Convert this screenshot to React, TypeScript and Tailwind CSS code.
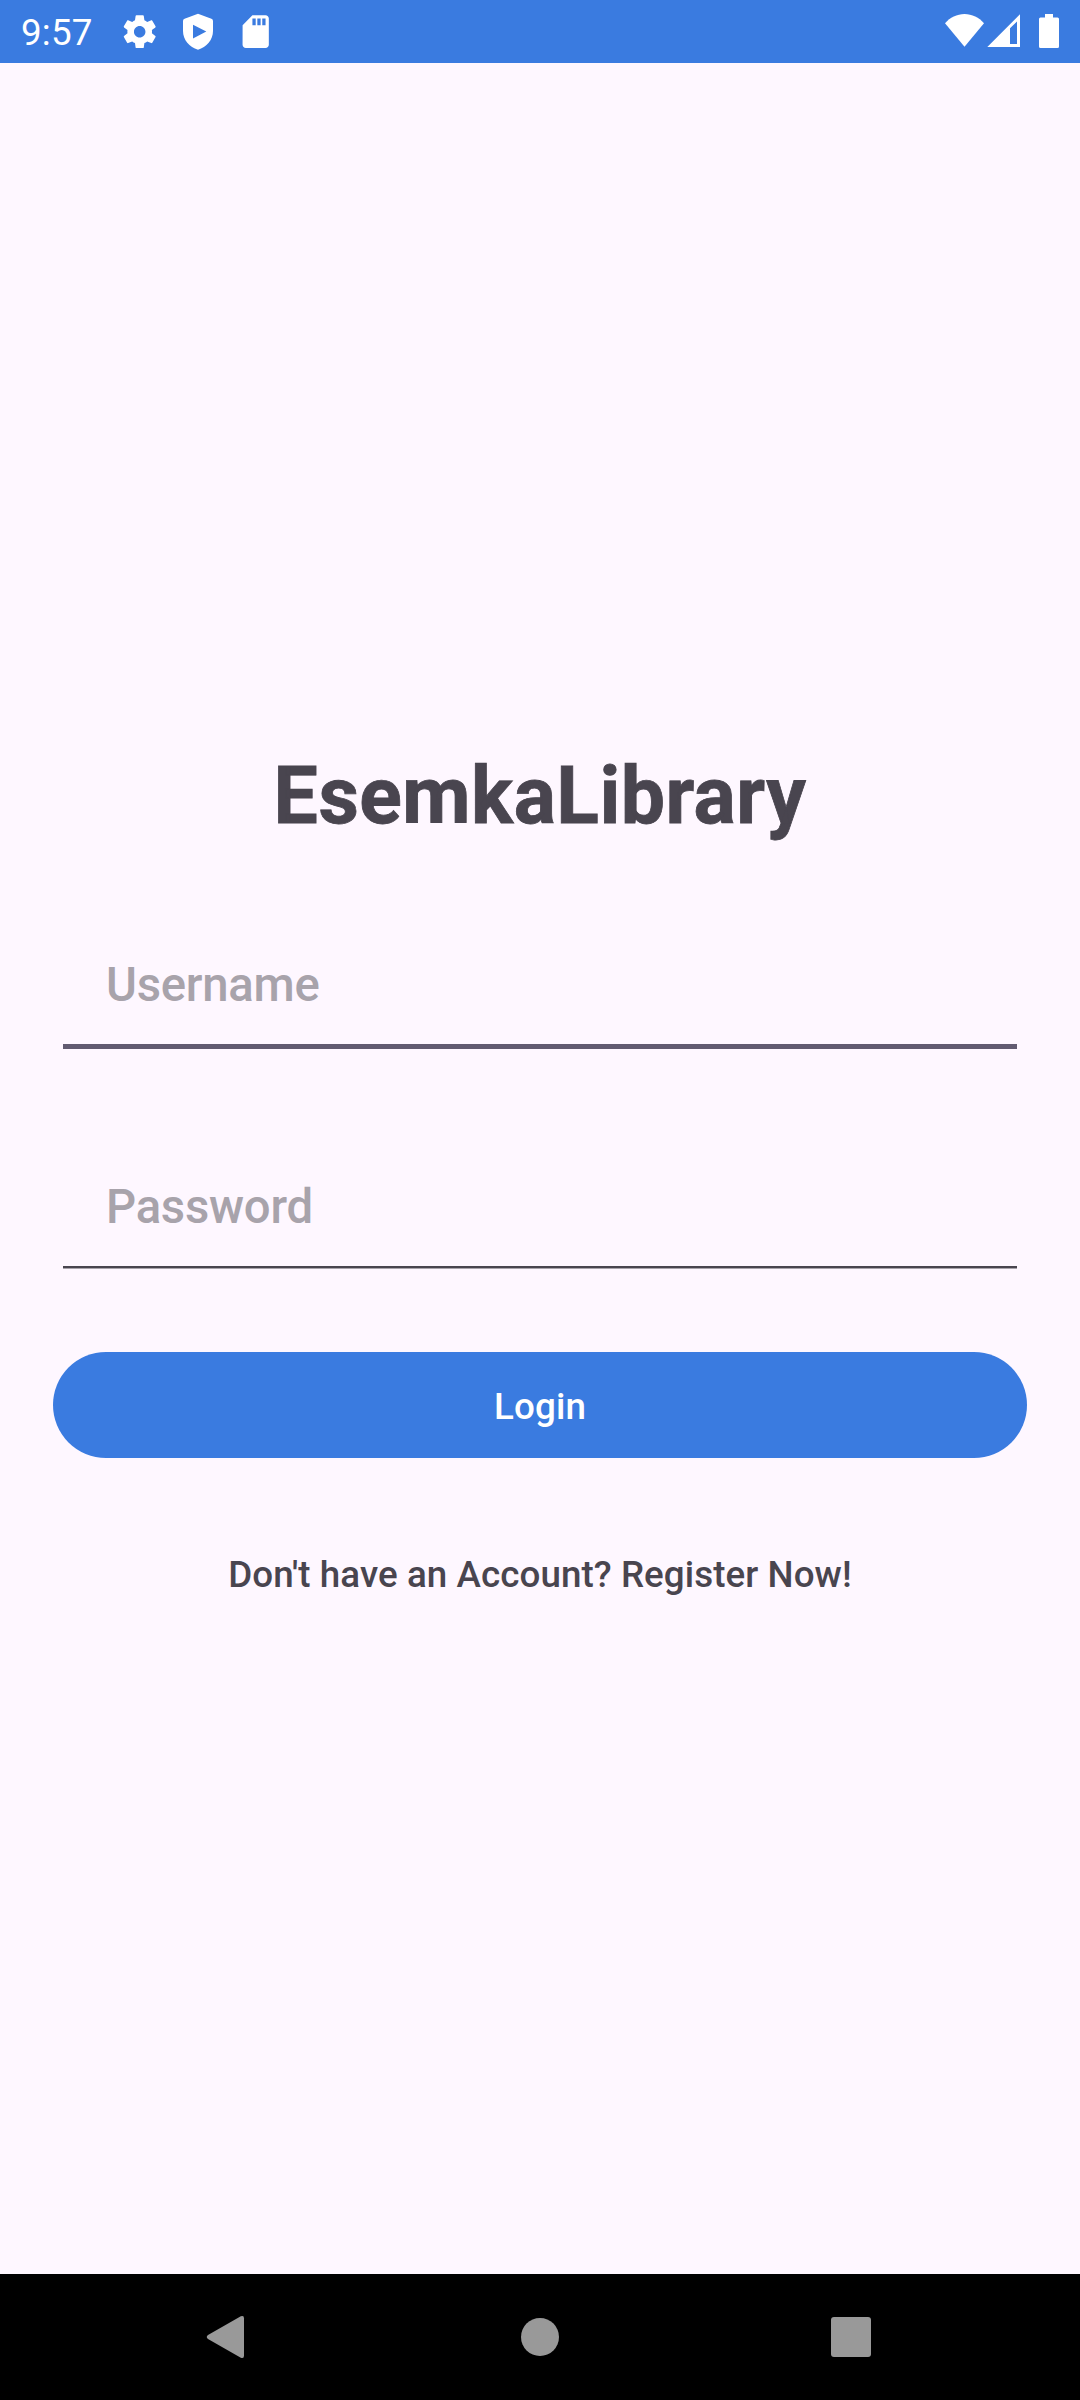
import React from "react";

function StatusBar() {
  return (
    <header className="flex h-[63px] items-start bg-[#3a7be0] text-white">
      <span className="ml-[21px] mt-[9px] w-[100px] text-[36.75px] leading-[48px] tracking-[0.2px]">9:57</span>
      <svg className="mt-[12px] -ml-[1px] h-[39.4px] w-[39.4px] shrink-0" viewBox="0 0 24 24" fill="currentColor">
        <path d="M19.43 12.98c.04-.32.07-.64.07-.98s-.03-.66-.07-.98l2.11-1.65c.19-.15.24-.42.12-.64l-2-3.46c-.12-.22-.39-.3-.61-.22l-2.49 1c-.52-.4-1.08-.73-1.69-.98l-.38-2.65C14.46 2.18 14.25 2 14 2h-4c-.25 0-.46.18-.49.42l-.38 2.65c-.61.25-1.17.59-1.69.98l-2.49-1c-.23-.09-.49 0-.61.22l-2 3.46c-.13.22-.07.49.12.64l2.11 1.65c-.04.32-.07.65-.07.98s.03.66.07.98l-2.11 1.65c-.19.15-.24.42-.12.64l2 3.46c.12.22.39.3.61.22l2.49-1c.52.4 1.08.73 1.69.98l.38 2.65c.03.24.24.42.49.42h4c.25 0 .46-.18.49-.42l.38-2.65c.61-.25 1.17-.59 1.69-.98l2.49 1c.23.09.49 0 .61-.22l2-3.46c.12-.22.07-.49-.12-.64l-2.11-1.65zM12 15.5c-1.93 0-3.5-1.57-3.5-3.5s1.57-3.5 3.5-3.5 3.5 1.57 3.5 3.5-1.57 3.5-3.5 3.5z" />
      </svg>
      <svg className="mt-[13px] ml-[22.6px] h-[38px] w-[32px] shrink-0" viewBox="182 13 32 38" fill="currentColor">
        <path fillRule="evenodd" d="M198 13.7 211.4 18.8Q213 19.4 213 21V31C213 40 206.5 47.2 198 49.7C189.5 47.2 183 40 183 31V21Q183 19.4 184.6 18.8ZM193 24.8V38.5L206.3 31.6Z" />
      </svg>
      <svg className="mt-[12px] ml-[22.4px] h-[39.4px] w-[39.4px] shrink-0" viewBox="0 0 24 24" fill="currentColor">
        <path d="M18 2h-8L4.02 8 4 20c0 1.1.9 2 2 2h12c1.1 0 2-.9 2-2V4c0-1.1-.9-2-2-2zm-6 6h-2V4h2v4zm3 0h-2V4h2v4zm3 0h-2V4h2v4z" />
      </svg>
      <svg className="ml-auto mr-[20px] mt-[12px] h-[38px] w-[116px] shrink-0" viewBox="944 12 116 38" fill="currentColor">
        <path d="M964.5 46.8 945 23.2C950 17.5 957 14 964.5 14S979 17.5 984 23.2Z" />
        <path fillRule="evenodd" d="M1020 14.3V47H987.3ZM1010 28.3V44H1017V21.5Z" />
        <path d="M1045 14H1053V17.5H1057.5Q1059 17.5 1059 19V46.5Q1059 48 1057.5 48H1040.5Q1039 48 1039 46.5V19Q1039 17.5 1040.5 17.5H1045Z" />
      </svg>
    </header>
  );
}

function NavigationBar() {
  return (
    <nav className="flex h-[126px] items-center justify-between bg-black pl-[206px] pr-[209px] text-[#999999]">
      <svg className="h-[44px] w-[39px]" viewBox="0 0 39 44" fill="currentColor">
        <path d="M34.8 1.3Q38 0 38 3.2V40.8Q38 44 34.8 42.7L2 24Q-.5 22 2 20Z" />
      </svg>
      <span className="ml-[4px] h-[38px] w-[38px] rounded-full bg-current" />
      <span className="h-[40px] w-[40px] rounded-[3px] bg-current" />
    </nav>
  );
}

export default function App() {
  return (
    <div className="flex h-[2400px] w-[1080px] flex-col overflow-hidden bg-[#fef7ff] font-['Roboto',sans-serif] text-[#49454f]">
      <StatusBar />
      <main className="flex flex-1 flex-col pt-[686px]">
        <h1 className="text-center text-[78.75px] leading-[94px] font-bold tracking-[0.5px] [-webkit-text-stroke:0.8px_#49454f]">
          EsemkaLibrary
        </h1>
        <input
          aria-label="Username"
          placeholder="Username"
          className="mx-[63px] mt-[84px] h-[122px] border-b-[5px] border-[#625b71] bg-transparent px-[43px] pb-[2px] text-[47.25px] font-medium tracking-[-0.25px] placeholder:text-[#a8a3ab]"
        />
        <input
          aria-label="Password"
          type="password"
          placeholder="Password"
          className="mx-[63px] mt-[100px] h-[119px] border-b-2 border-[#49454f] bg-transparent px-[43px] pb-[2px] text-[47.25px] font-medium tracking-[-0.25px] shadow-[0_1px_0_#a8a3ab] placeholder:text-[#a8a3ab]"
        />
        <button className="mx-[53px] mt-[84px] h-[106px] rounded-full bg-[#3a7be0] pt-[4px] text-[36.75px] font-medium tracking-[0.15px] text-white">
          Login
        </button>
        <p className="mt-[95px] text-center text-[36.75px] leading-[44px] font-medium tracking-[0.07px]">
          Don't have an Account? Register Now!
        </p>
      </main>
      <NavigationBar />
    </div>
  );
}
